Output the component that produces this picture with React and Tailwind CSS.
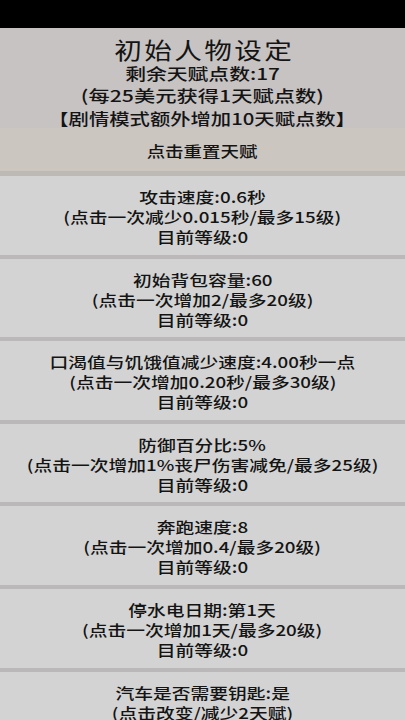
import React from "react";

const cards = [
  ["攻击速度:0.6秒", "(点击一次减少0.015秒/最多15级)", "目前等级:0"],
  ["初始背包容量:60", "(点击一次增加2/最多20级)", "目前等级:0"],
  ["口渴值与饥饿值减少速度:4.00秒一点", "(点击一次增加0.20秒/最多30级)", "目前等级:0"],
  ["防御百分比:5%", "(点击一次增加1%丧尸伤害减免/最多25级)", "目前等级:0"],
  ["奔跑速度:8", "(点击一次增加0.4/最多20级)", "目前等级:0"],
  ["停水电日期:第1天", "(点击一次增加1天/最多20级)", "目前等级:0"],
  ["汽车是否需要钥匙:是", "(点击改变/减少2天赋)"],
];

export default function App() {
  return (
    <div
      className="w-[405px] h-[720px] overflow-hidden bg-[#d3d3d3] text-[#141414] font-medium"
      style={{ fontFamily: '"Noto Sans CJK SC", "Noto Sans", sans-serif' }}
    >
      <div className="h-[28px] bg-black" />
      <div className="h-[100px] bg-[#c7c3c2] pt-[9px] flex flex-col items-center">
        <div className="text-[23px] leading-[25px] tracking-[2px] pl-[2px] scale-x-[1.2] font-normal">初始人物设定</div>
        <div className="text-[16px] leading-[22px] scale-x-[1.3]">剩余天赋点数:17</div>
        <div className="text-[16px] leading-[23px] scale-x-[1.33]">(每25美元获得1天赋点数)</div>
        <div className="text-[16px] leading-[22px] scale-x-[1.27]">【剧情模式额外增加10天赋点数】</div>
      </div>
      <div className="h-[48px] bg-[#cbc7c0] border-b-[5px] border-[#bdb9b4] flex items-center justify-center pt-[3px]">
        <div className="text-[15px] leading-[20px] scale-x-[1.23]">点击重置天赋</div>
      </div>
      <div className="flex flex-col">
        {cards.map((c, i) => (
          <div
            key={i}
            className="h-[82.6px] shrink-0 bg-[#d3d3d3] border-b-[4px] border-[#bab8b8] pt-[11px] flex flex-col items-center"
          >
            {c.map((t, j) => (
              <div key={j} className="text-[15px] leading-[20px] whitespace-nowrap scale-x-[1.25]">
                {t}
              </div>
            ))}
          </div>
        ))}
      </div>
    </div>
  );
}
